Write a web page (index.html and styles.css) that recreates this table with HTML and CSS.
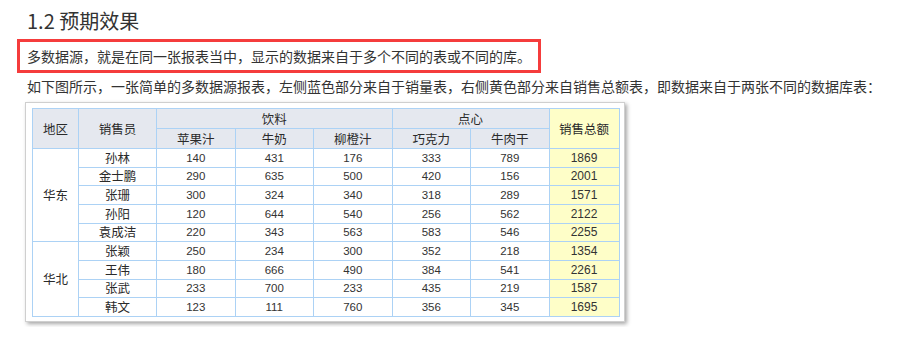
FILE: index.html
```html
<!DOCTYPE html>
<html lang="zh">
<head>
<meta charset="utf-8">
<link rel="stylesheet" href="styles.css">
</head>
<body>
<div class="doc">
  <h2 class="title">1.2 预期效果</h2>
  <p class="note">多数据源，就是在同一张报表当中，显示的数据来自于多个不同的表或不同的库。</p>
  <p class="desc">如下图所示，一张简单的多数据源报表，左侧蓝色部分来自于销量表，右侧黄色部分来自销售总额表，即数据来自于两张不同的数据库表：</p>
  <div class="shot">
    <table class="report">
      <colgroup>
        <col class="c-area"><col class="c-name"><col class="c-n"><col class="c-n"><col class="c-n"><col class="c-n"><col class="c-n"><col class="c-total">
      </colgroup>
      <thead>
        <tr class="h1">
          <th rowspan="2">地区</th>
          <th rowspan="2">销售员</th>
          <th colspan="3">饮料</th>
          <th colspan="2">点心</th>
          <th rowspan="2" class="total">销售总额</th>
        </tr>
        <tr class="h2">
          <th>苹果汁</th><th>牛奶</th><th>柳橙汁</th><th>巧克力</th><th>牛肉干</th>
        </tr>
      </thead>
      <tbody>
        <tr><td class="txt" rowspan="5">华东</td><td class="txt">孙林</td><td>140</td><td>431</td><td>176</td><td>333</td><td>789</td><td class="total">1869</td></tr>
        <tr><td class="txt">金士鹏</td><td>290</td><td>635</td><td>500</td><td>420</td><td>156</td><td class="total">2001</td></tr>
        <tr><td class="txt">张珊</td><td>300</td><td>324</td><td>340</td><td>318</td><td>289</td><td class="total">1571</td></tr>
        <tr><td class="txt">孙阳</td><td>120</td><td>644</td><td>540</td><td>256</td><td>562</td><td class="total">2122</td></tr>
        <tr><td class="txt">袁成洁</td><td>220</td><td>343</td><td>563</td><td>583</td><td>546</td><td class="total">2255</td></tr>
        <tr><td class="txt" rowspan="4">华北</td><td class="txt">张颖</td><td>250</td><td>234</td><td>300</td><td>352</td><td>218</td><td class="total">1354</td></tr>
        <tr><td class="txt">王伟</td><td>180</td><td>666</td><td>490</td><td>384</td><td>541</td><td class="total">2261</td></tr>
        <tr><td class="txt">张武</td><td>233</td><td>700</td><td>233</td><td>435</td><td>219</td><td class="total">1587</td></tr>
        <tr><td class="txt">韩文</td><td>123</td><td>111</td><td>760</td><td>356</td><td>345</td><td class="total">1695</td></tr>
      </tbody>
    </table>
  </div>
</div>
</body>
</html>
```
FILE: styles.css
```css
html, body {
  margin: 0;
  padding: 0;
  background: #fff;
}
body {
  font-family: "Noto Sans CJK SC", "Liberation Sans", sans-serif;
  color: #333;
}
.doc {
  padding: 7px 0 0 27px;
}
.title {
  margin: 0 0 4px 0;
  font-size: 20px;
  line-height: 28px;
  font-weight: 400;
  color: #333;
}
.note {
  margin: 0 0 0 -10px;
  width: 511px;
  padding: 0 0 0 7px;
  border: 3px solid #f53c3c;
  font-size: 14px;
  line-height: 28px;
  color: #333;
}
.desc {
  margin: 0;
  font-size: 14px;
  line-height: 26px;
  color: #333;
}
.shot {
  display: inline-block;
  margin: 3px 0 0 -2px;
  padding: 5px 4px 4px 6px;
  background: #fff;
  border: 1px solid #cfcfcf;
  box-shadow: 2px 2px 4px rgba(0, 0, 0, 0.35);
}
.report {
  border-collapse: collapse;
  table-layout: fixed;
  font-family: "Noto Sans CJK SC", sans-serif;
  font-size: 12px;
  color: #2a2a2a;
}
.c-area { width: 46px; }
.c-name { width: 78px; }
.c-n { width: 78.5px; }
.c-total { width: 70px; }
.report th, .report td {
  border: 1px solid #acd2f5;
  padding: 0;
  text-align: center;
  font-weight: 400;
  line-height: 16px;
}
.report th {
  background: #e5e8ef;
  height: 19px;
  font-size: 12.5px;
}
.report tbody tr {
  height: 18.67px;
}
.report td {
  font-family: "Liberation Sans", "Noto Sans CJK SC", sans-serif;
  font-size: 11.5px;
  color: #333;
}
.report td.txt {
  font-family: "Noto Sans CJK SC", sans-serif;
  font-size: 12.5px;
  color: #2a2a2a;
}
.report .total {
  background: #fefec8;
}
.report td.total {
  font-size: 12px;
}
```
